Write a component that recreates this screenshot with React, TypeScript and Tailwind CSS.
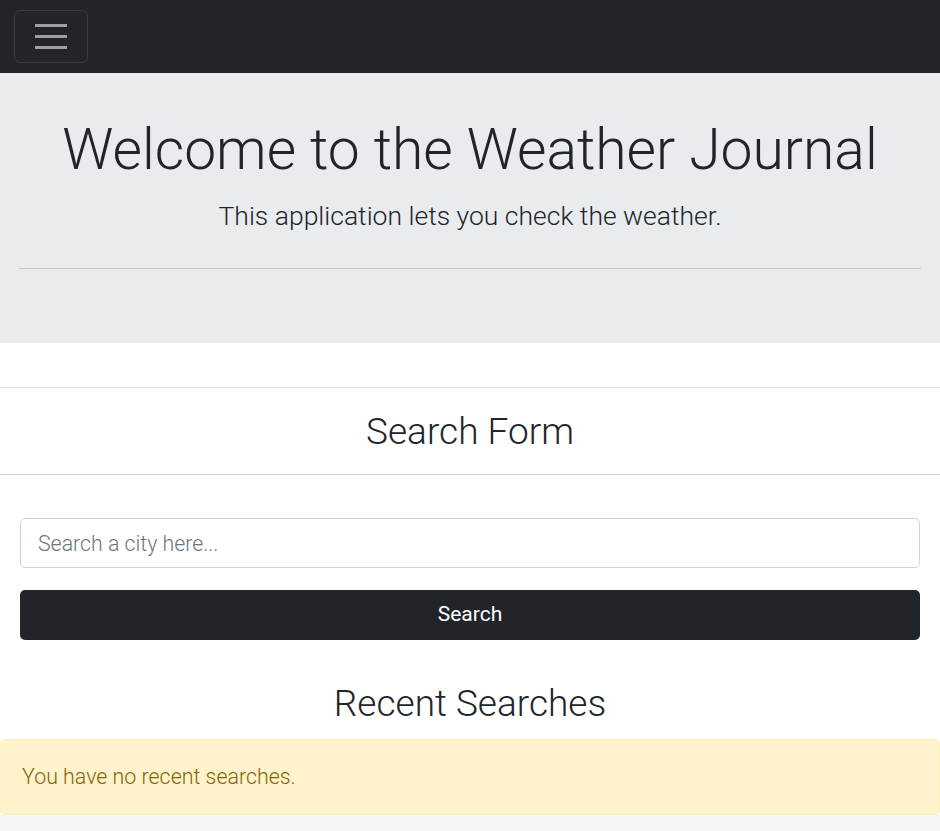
import React from "react";

export default function App() {
  return (
    <div
      className="flex min-h-screen flex-col bg-white text-[#212529]"
      style={{ fontFamily: "Roboto, 'Liberation Sans', sans-serif" }}
    >
      <nav className="flex h-[73px] items-center bg-[#212529] px-[14px]">
        <button className="flex h-[53px] w-[74px] flex-col items-center justify-center gap-[8.5px] rounded-[6px] border border-white/10">
          <span className="block h-[2.5px] w-[32px] bg-[#9d9fa0]" />
          <span className="block h-[2.5px] w-[32px] bg-[#9d9fa0]" />
          <span className="block h-[2.5px] w-[32px] bg-[#9d9fa0]" />
        </button>
      </nav>

      <header className="h-[270px] bg-[#e9ecef] px-[19px] pt-[43px]">
        <h1 className="text-center text-[57px] font-light leading-[1.2]">
          Welcome to the Weather Journal
        </h1>
        <p className="mt-[12px] text-center text-[26.5px] font-light leading-[1.5]">
          This application lets you check the weather.
        </p>
        <hr className="mt-[32px] border-0 border-t-[1.5px] border-[#c4c7ca]" />
      </header>

      <div className="h-[44px]" />

      <section className="flex h-[88px] items-center justify-center border-y-[1.5px] border-t-[#dfe2e5] border-b-[#d0d1d2]">
        <h2 className="text-[37px] font-light leading-none">Search Form</h2>
      </section>

      <form className="flex flex-col gap-[22px] px-[20px] pt-[43px]" onSubmit={(e) => e.preventDefault()}>
        <input
          type="text"
          placeholder="Search a city here..."
          className="h-[50px] w-full rounded-[5px] border border-[#ced4da] bg-white px-[17px] text-[21.3px] font-light text-[#495057] outline-none placeholder:text-[#6c757d]"
        />
        <button
          type="submit"
          className="h-[50px] w-full rounded-[5px] bg-[#212529] text-[21px] font-normal text-white"
        >
          Search
        </button>
      </form>

      <h2 className="mt-[42px] mb-[12.5px] text-center text-[37px] font-light leading-[1.2]">
        Recent Searches
      </h2>

      <div className="flex h-[76px] items-center rounded-[5px] border border-[#ffeeba] bg-[#fff3cd] px-[21px] text-[21.4px] font-light text-[#856404]">
        You have no recent searches.
      </div>

      <div className="flex-1 bg-[#f5f5f5]" />
    </div>
  );
}
